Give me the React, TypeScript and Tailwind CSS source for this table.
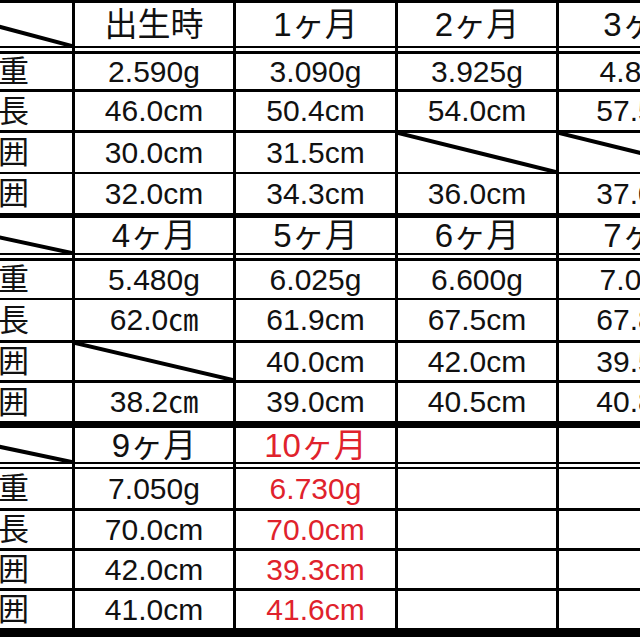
import React from "react";

const DIAG = "__diag__";

function Diag({ className, w }: { className: string; w: number }) {
  return (
    <svg className={className} viewBox="0 0 100 100" preserveAspectRatio="none">
      <line x1="0" y1="0" x2="100" y2="100" stroke="#000" strokeWidth={w} vectorEffect="non-scaling-stroke" />
    </svg>
  );
}

const colW = ["w-[161px]", "w-[162px]", "w-[161px]", "w-[162px] pl-[14px]"];

function Row({
  cls,
  label,
  labelDiag,
  cells,
  header,
  redCol,
}: {
  cls: string;
  label?: string;
  labelDiag?: boolean;
  cells: string[];
  header?: boolean;
  redCol?: number;
}) {
  return (
    <div className={`flex border-black ${cls}`}>
      <div className="relative flex w-[72px] shrink-0 items-center justify-end overflow-hidden pr-[43px] text-[31px] leading-none">
        {label && <span className="whitespace-nowrap">{label}</span>}
        {labelDiag && <Diag w={4} className="absolute left-[-90px] top-0 h-full w-[162px]" />}
      </div>
      {cells.map((c, i) => (
        <div
          key={i}
          className={`relative flex shrink-0 items-center justify-center overflow-hidden border-l-[3px] border-black ${colW[i]} ${
            redCol === i ? "text-[#e0222c]" : "text-[#111]"
          } ${header ? "text-[33px]" : "text-[30px]"} leading-none whitespace-nowrap`}
        >
          {c === DIAG ? <Diag w={4} className="absolute inset-0 h-full w-full" /> : c}
        </div>
      ))}
    </div>
  );
}

const empty = ["", "", "", ""];

export default function App() {
  return (
    <div className="h-[640px] w-[640px] overflow-hidden bg-white font-['Liberation_Sans','Noto_Sans_CJK_JP',sans-serif] text-[#111]">
      {/* Section 1 */}
      <div className="h-[3px] bg-black" />
      <Row cls="h-[45px] border-b-[2px]" labelDiag header cells={["出生時", "1ヶ月", "2ヶ月", "3ヶ月"]} />
      <Row cls="h-[3px]" cells={empty} />
      <Row cls="h-[41px] border-t-[3px] border-b-[3px]" label="体重" cells={["2.590g", "3.090g", "3.925g", "4.850g"]} />
      <Row cls="h-[41px] border-b-[3px]" label="身長" cells={["46.0cm", "50.4cm", "54.0cm", "57.5cm"]} />
      <Row cls="h-[41px] border-b-[2px]" label="頭囲" cells={["30.0cm", "31.5cm", DIAG, DIAG]} />
      <Row cls="h-[39px]" label="胸囲" cells={["32.0cm", "34.3cm", "36.0cm", "37.0cm"]} />
      <div className="h-[5px] bg-black" />

      {/* Section 2 */}
      <Row cls="h-[37px] border-b-[2px]" labelDiag header cells={["4ヶ月", "5ヶ月", "6ヶ月", "7ヶ月"]} />
      <Row cls="h-[3px]" cells={empty} />
      <Row cls="h-[42px] border-t-[3px] border-b-[2px]" label="体重" cells={["5.480g", "6.025g", "6.600g", "7.020g"]} />
      <Row cls="h-[43px] border-b-[3px]" label="身長" cells={["62.0㎝", "61.9cm", "67.5cm", "67.8cm"]} />
      <Row cls="h-[40px] border-b-[3px]" label="頭囲" cells={[DIAG, "40.0cm", "42.0cm", "39.5cm"]} />
      <Row cls="h-[38px]" label="胸囲" cells={["38.2㎝", "39.0cm", "40.5cm", "40.8cm"]} />
      <div className="h-[7px] bg-black" />

      {/* Section 3 */}
      <Row cls="h-[36px] border-b-[2px]" labelDiag header redCol={1} cells={["9ヶ月", "10ヶ月", "", ""]} />
      <Row cls="h-[3px]" cells={empty} />
      <Row cls="h-[44px] border-t-[2px] border-b-[3px]" label="体重" redCol={1} cells={["7.050g", "6.730g", "", ""]} />
      <Row cls="h-[40px] border-b-[3px]" label="身長" redCol={1} cells={["70.0cm", "70.0cm", "", ""]} />
      <Row cls="h-[40px] border-b-[3px]" label="頭囲" redCol={1} cells={["42.0cm", "39.3cm", "", ""]} />
      <Row cls="h-[37px]" label="胸囲" redCol={1} cells={["41.0cm", "41.6cm", "", ""]} />
      <div className="h-[9px] bg-black" />
    </div>
  );
}
